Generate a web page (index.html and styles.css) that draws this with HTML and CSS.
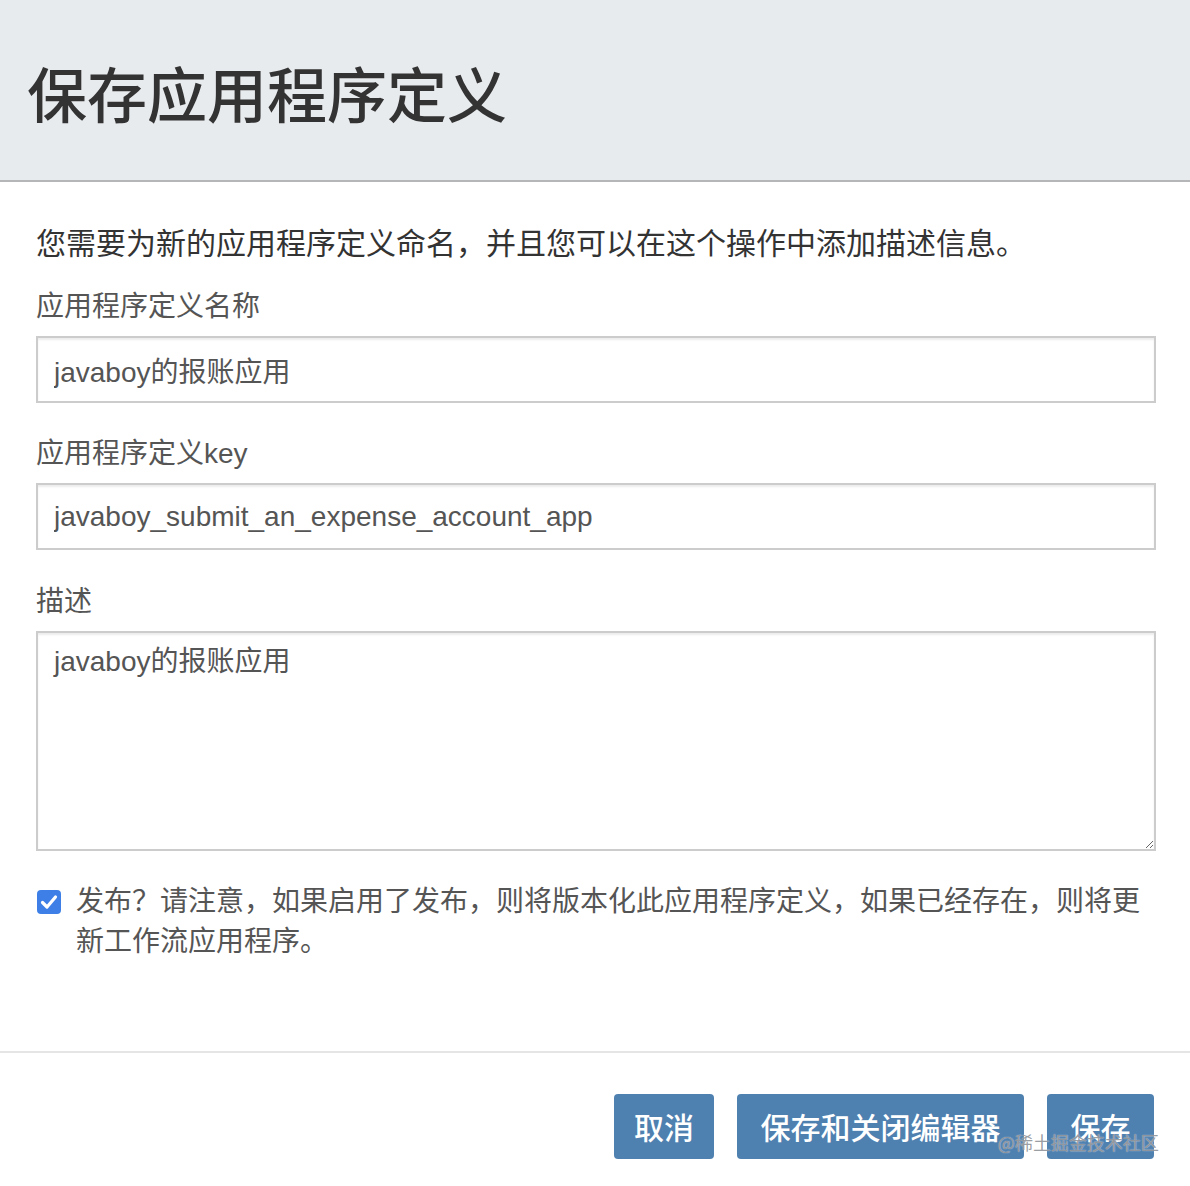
FILE: index.html
```html
<!DOCTYPE html>
<html lang="zh-CN">
<head>
<meta charset="utf-8">
<title>保存应用程序定义</title>
<link rel="stylesheet" href="styles.css">
</head>
<body>
<div class="modal">
  <div class="modal-header">
    <h1 class="modal-title">保存应用程序定义</h1>
  </div>
  <div class="modal-body">
    <p class="intro">您需要为新的应用程序定义命名，并且您可以在这个操作中添加描述信息。</p>
    <div class="form-group">
      <label class="form-label">应用程序定义名称</label>
      <input class="form-control" type="text" value="javaboy的报账应用">
    </div>
    <div class="form-group">
      <label class="form-label">应用程序定义key</label>
      <input class="form-control" type="text" value="javaboy_submit_an_expense_account_app">
    </div>
    <div class="form-group form-group-desc">
      <label class="form-label">描述</label>
      <textarea class="form-control form-textarea">javaboy的报账应用</textarea>
    </div>
    <div class="check-row">
      <span class="checkbox">
        <svg viewBox="0 0 24 24" width="24" height="24"><path d="M5.5 12.5 L10 17 L18.5 7" fill="none" stroke="#fff" stroke-width="3.2" stroke-linecap="round" stroke-linejoin="round"/></svg>
      </span>
      <span class="check-text">发布？请注意，如果启用了发布，则将版本化此应用程序定义，如果已经存在，则将更新工作流应用程序。</span>
    </div>
  </div>
  <div class="modal-footer">
    <button class="btn btn-cancel">取消</button>
    <button class="btn">保存和关闭编辑器</button>
    <button class="btn">保存</button>
    <span class="watermark">@稀土掘金技术社区</span>
  </div>
</div>
</body>
</html>
```
FILE: styles.css
```css
html, body {
  margin: 0;
  padding: 0;
  background: #ffffff;
}

body {
  font-family: "Liberation Sans", "Noto Sans CJK SC", sans-serif;
  color: #555555;
}

.modal {
  width: 1190px;
}

.modal-header {
  height: 182px;
  box-sizing: border-box;
  padding: 4px 0 0 27px;
  display: flex;
  align-items: center;
  background: #e8ebee;
  border-bottom: 2px solid #b4b6b8;
}

.modal-title {
  margin: 0;
  font-family: "Noto Sans CJK SC", sans-serif;
  font-size: 60px;
  font-weight: 500;
  line-height: 1;
  color: #333333;
}

.modal-body {
  padding: 42px 34px 89px 36px;
}

.intro {
  margin: 0 0 22px 0;
  font-size: 30px;
  line-height: 40px;
  color: #333333;
}

.form-group {
  display: flex;
  flex-direction: column;
  margin-bottom: 30px;
}

.form-group-desc {
  padding-top: 1px;
}

.form-label {
  font-size: 28px;
  line-height: 40px;
  padding-top: 1px;
  margin-bottom: 9px;
  color: #555555;
}

.form-control {
  box-sizing: border-box;
  width: 100%;
  height: 67px;
  margin: 0;
  padding: 0 16px;
  border: 2px solid #cccccc;
  border-radius: 0;
  box-shadow: inset 0 2px 2px rgba(0, 0, 0, 0.075);
  font-family: "Liberation Sans", "Noto Sans CJK SC", sans-serif;
  font-size: 28px;
  color: #555555;
  background: #ffffff;
  outline: none;
}

.form-textarea {
  height: 220px;
  padding: 9px 16px;
  line-height: 40px;
  resize: vertical;
  display: block;
}

.check-row {
  display: flex;
  align-items: flex-start;
  gap: 15px;
  padding-left: 1px;
  padding-top: 1px;
}

.checkbox {
  flex: none;
  width: 24px;
  height: 24px;
  margin-top: 8px;
  border-radius: 4px;
  background: #3d7fe6;
  display: flex;
}

.check-text {
  font-size: 28px;
  line-height: 40px;
  color: #555555;
}

.modal-footer {
  position: relative;
  border-top: 2px solid #e5e5e5;
  padding: 41px 36px 27px 36px;
  display: flex;
  justify-content: flex-end;
  gap: 23px;
}

.btn {
  height: 65px;
  padding: 0 23.5px;
  border: none;
  border-radius: 4px;
  background: #4e80b0;
  color: #ffffff;
  font-family: "Noto Sans CJK SC", sans-serif;
  font-size: 30px;
  font-weight: 500;
  line-height: 65px;
  cursor: pointer;
}

.btn-cancel {
  padding: 0 20px;
}

.watermark {
  position: absolute;
  right: 31px;
  top: 78px;
  font-family: "Noto Sans CJK SC", sans-serif;
  font-size: 18px;
  line-height: 22px;
  color: rgba(110, 115, 122, 0.7);
  text-shadow: 0 0 1px rgba(255, 255, 255, 0.9);
  pointer-events: none;
}
```
